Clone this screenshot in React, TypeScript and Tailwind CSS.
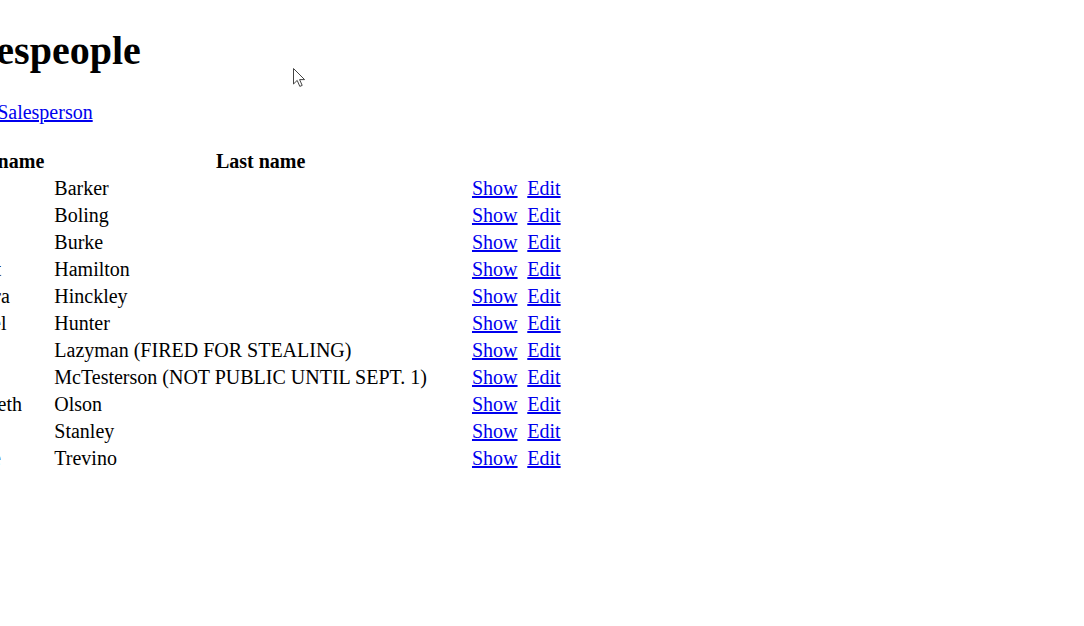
const salespeople = [
  { first: 'Bob', last: 'Barker' },
  { first: 'Mary', last: 'Boling' },
  { first: 'John', last: 'Burke' },
  { first: 'Robert', last: 'Hamilton' },
  { first: 'Barbara', last: 'Hinckley' },
  { first: 'Samuel', last: 'Hunter' },
  { first: 'Larry', last: 'Lazyman (FIRED FOR STEALING)' },
  { first: 'Test', last: 'McTesterson (NOT PUBLIC UNTIL SEPT. 1)' },
  { first: 'Elizabeth', last: 'Olson' },
  { first: 'Jane', last: 'Stanley' },
  { first: 'Louise', last: 'Trevino' },
]

const Cursor = () => (
  <svg
    className="absolute left-[293px] top-[68px]"
    width="13"
    height="20"
    viewBox="0 0 13 20"
  >
    <path
      d="M0.5 0.5 L0.5 16 L4.2 12.4 L6.8 18.4 L9.2 17.4 L6.6 11.6 L11.6 11.6 Z"
      fill="#fff"
      stroke="#444"
      strokeWidth="1"
      strokeLinejoin="round"
    />
  </svg>
)

const App = () => {
  return (
    <div className="relative min-h-screen overflow-hidden bg-white text-black font-['Liberation_Serif',serif]">
      <div className="ml-[-57px]">
        <h1 className="pt-[29px] text-[40px] leading-[44px] font-bold whitespace-nowrap">
          Salespeople
        </h1>

        <p className="mt-[28px] ml-[11.4px] text-[20px] leading-[22px]">
          <a href="#" className="text-[#0000ee] underline">
            New Salesperson
          </a>
        </p>

        <table className="mt-[25px] ml-[3.5px] border-collapse text-[20px] leading-[27px]">
          <thead>
            <tr>
              <th className="w-[107.8px] pr-[5px] text-center font-bold whitespace-nowrap">
                First name
              </th>
              <th className="w-[417.7px] pr-[5px] text-center font-bold whitespace-nowrap">
                Last name
              </th>
              <th className="w-[55.3px]" />
              <th />
            </tr>
          </thead>
          <tbody>
            {salespeople.map((p) => (
              <tr key={p.last}>
                <td className="whitespace-nowrap">{p.first}</td>
                <td className="whitespace-nowrap">{p.last}</td>
                <td>
                  <a href="#" className="text-[#0000ee] underline">
                    Show
                  </a>
                </td>
                <td>
                  <a href="#" className="text-[#0000ee] underline">
                    Edit
                  </a>
                </td>
              </tr>
            ))}
          </tbody>
        </table>
      </div>

      <Cursor />
    </div>
  )
}

export default App
